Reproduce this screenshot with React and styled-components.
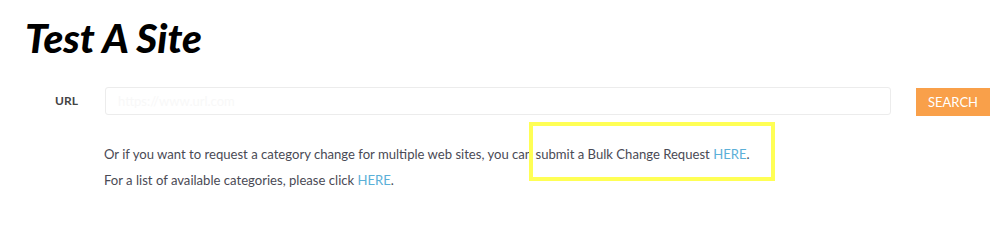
import React from "react";
import styled, { createGlobalStyle } from "styled-components";

const Global = createGlobalStyle`
  html, body { margin: 0; padding: 0; background: #fff; }
  body { font-family: Lato, "Open Sans", Arial, sans-serif; }
  * { box-sizing: border-box; }
`;

const Page = styled.div`
  position: relative;
  width: 998px;
  height: 232px;
  padding: 13px 8px 0 25px;
`;

const Title = styled.h1`
  margin: 0;
  font-family: Lato, sans-serif;
  font-style: italic;
  font-weight: 900;
  font-size: 40.5px;
  line-height: 49px;
  color: #000;
`;

const FormRow = styled.form`
  display: flex;
  align-items: flex-start;
  margin: 25px 0 0 30px;
`;

const Label = styled.label`
  width: 50px;
  font-size: 12px;
  line-height: 28px;
  font-weight: 700;
  color: #444;
`;

const Input = styled.input`
  flex: 1;
  height: 28px;
  border: 1px solid #ececec;
  border-radius: 3px;
  padding: 0 12px;
  font-family: Lato, sans-serif;
  font-size: 13px;
  outline: none;
  &::placeholder { color: #f8f8f8; }
`;

const Button = styled.button`
  margin: 1px 0 0 25px;
  width: 74px;
  height: 28px;
  border: none;
  background: #f9a04a;
  color: #fff;
  font-family: Lato, sans-serif;
  font-size: 13px;
  padding: 0;
`;

const Notes = styled.div`
  margin: 25px 0 0 79px;
  font-size: 13.1px;
  line-height: 26px;
  color: #4a4a55;
`;

const Line = styled.p`
  margin: 0;
`;

const Link = styled.a`
  color: #5bb0d8;
  text-decoration: none;
`;

const Highlight = styled.div`
  position: absolute;
  left: 529px;
  top: 122px;
  width: 246px;
  height: 59px;
  border: 4px solid #ffff55;
  pointer-events: none;
`;

export default function App() {
  return (
    <>
      <Global />
      <Page>
        <Title>Test A Site</Title>
        <FormRow onSubmit={(e) => e.preventDefault()}>
          <Label>URL</Label>
          <Input placeholder="https://www.url.com" />
          <Button type="submit">SEARCH</Button>
        </FormRow>
        <Notes>
          <Line>
            Or if you want to request a category change for multiple web sites, you can submit a Bulk Change Request{" "}
            <Link href="#">HERE</Link>.
          </Line>
          <Line>
            For a list of available categories, please click <Link href="#">HERE</Link>.
          </Line>
        </Notes>
        <Highlight />
      </Page>
    </>
  );
}
